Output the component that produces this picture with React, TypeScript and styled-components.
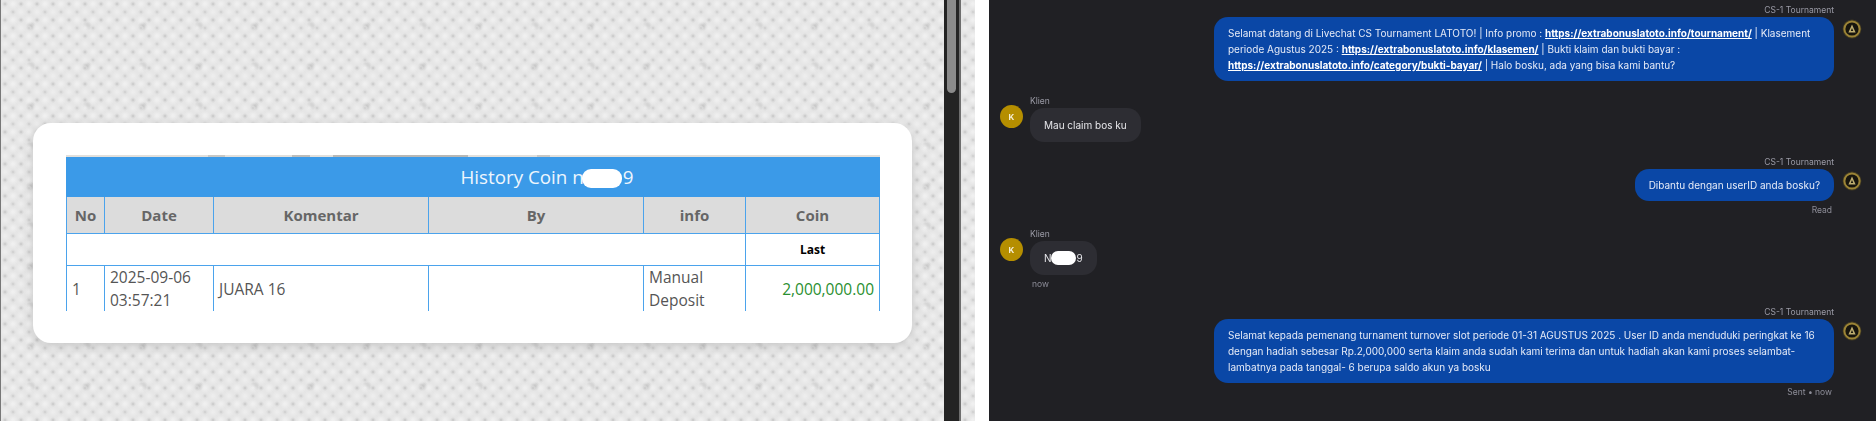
import { FC, ReactNode } from "react";
import styled, { createGlobalStyle } from "styled-components";

const GlobalStyle = createGlobalStyle`
  html, body {
    margin: 0;
    padding: 0;
    background: #202024;
  }
`;

const Page = styled.div`
  display: flex;
  width: 1876px;
  height: 421px;
  overflow: hidden;
`;

const texture = `
  background-color: #e6e6e6;
  background-image:
    radial-gradient(circle at 4px 4px, #c2c2c2 0, #d6d6d6 1.2px, transparent 3px),
    radial-gradient(circle at 12px 12px, #c8c8c8 0, #dadada 1.2px, transparent 3px),
    radial-gradient(circle at 12px 4px, #f2f2f2 0, transparent 5px),
    radial-gradient(circle at 4px 12px, #efefef 0, transparent 5px),
    radial-gradient(circle at 30px 26px, rgba(150, 150, 150, 0.4) 0, transparent 5px);
  background-size: 16px 16px, 16px 16px, 16px 16px, 16px 16px, 56px 40px;
`;

const LeftPane = styled.div`
  ${texture}
  width: 944px;
  flex: none;
  padding: 123px 0 0 33px;
  box-sizing: border-box;
  border-left: 1px solid #777;
`;

const Card = styled.div`
  width: 879px;
  height: 220px;
  margin-left: -1px;
  box-sizing: border-box;
  padding: 32px 32px 32px 33px;
  background: #fff;
  border-radius: 18px;
  box-shadow: 0 3px 12px rgba(0, 0, 0, 0.14);
`;

const TableClip = styled.div`
  height: 156px;
  overflow: hidden;
`;

// the row scrolled away behind the title still shows its bottom pixels
const ScrolledEdge = styled.div`
  height: 2px;
  background: linear-gradient(
    90deg,
    #e2e0dc 0 142px,
    #c8c8c5 142px 159px,
    #e2e0dc 159px 226px,
    #bdbdba 226px 244px,
    #e2e0dc 244px 267px,
    #b8b8b5 267px 402px,
    #e2e0dc 402px 471px,
    #c8c8c5 471px 484px,
    #e2e0dc 484px
  );
`;

const Table = styled.table`
  width: 813px;
  table-layout: fixed;
  border-collapse: collapse;
  font-family: "Open Sans", sans-serif;
  font-size: 15.5px;
  color: #555;

  td, th {
    border: 1px solid #4ba3ec;
    box-sizing: border-box;
  }
`;

const Title = styled.th`
  height: 39px;
  padding: 0 0 0 148px;
  background: #3b9ae8;
  border-color: #3b9ae8 !important;
  color: #eef6fd;
  font-size: 18.8px;
  font-weight: 400;
  text-align: center;
`;

const HeadCell = styled.th`
  height: 37px;
  padding: 0;
  background: #dcdcdc;
  color: #666;
  font-size: 15px;
  font-weight: 700;
  text-align: center;
`;

const BlankCell = styled.td`
  height: 32px;
  padding: 0;
`;

const LastCell = styled.td`
  padding: 0;
  color: #000;
  font-size: 12px;
  font-weight: 700;
  text-align: center;
`;

const BodyCell = styled.td<{ $align?: string }>`
  padding: 0 5px 6px;
  height: 52px;
  line-height: 23px;
  text-align: ${(p) => p.$align || "left"};
`;

const CoinValue = styled.span`
  color: #2a8f30;
`;

const TitleMask = styled.span`
  display: inline-block;
  width: 40px;
  height: 19px;
  margin: 0 1px 0 -2px;
  border-radius: 9px;
  background: #fff;
  vertical-align: -4px;
`;

const Scrollbar = styled.div`
  width: 17px;
  flex: none;
  padding: 0 3px;
  box-sizing: border-box;
  background: #232323;
  border-right: 2px solid #6e6e6e;
`;

const ScrollThumb = styled.div`
  width: 9px;
  height: 93px;
  background: #8a8a8a;
  border-radius: 0 0 5px 5px;
`;

const TextureSliver = styled.div`
  ${texture}
  width: 14px;
  flex: none;
`;

const WhiteGap = styled.div`
  width: 14px;
  flex: none;
  background: #fff;
`;

const ChatPane = styled.div`
  flex: 1;
  display: flex;
  flex-direction: column;
  background: #202024;
  padding: 4px 0 0 11px;
  box-sizing: border-box;
  font-family: Inter, "Noto Sans", sans-serif;
  font-size: 10px;
  line-height: 16px;
  color: #e6e6ea;
  filter: blur(0.35px);
`;

const MessageRow = styled.div<{ $out?: boolean; $top: number }>`
  display: flex;
  justify-content: ${(p) => (p.$out ? "flex-end" : "flex-start")};
  gap: ${(p) => (p.$out ? 8 : 7)}px;
  margin-top: ${(p) => p.$top}px;
  padding-right: ${(p) => (p.$out ? 14 : 0)}px;
`;

const Stack = styled.div<{ $out?: boolean }>`
  display: flex;
  flex-direction: column;
  align-items: ${(p) => (p.$out ? "flex-end" : "flex-start")};
`;

const Label = styled.div`
  font-size: 8.5px;
  line-height: 13px;
  color: #9b9ba6;
`;

const Meta = styled.div<{ $left?: boolean }>`
  font-size: 8.5px;
  line-height: 12px;
  color: #8d8d98;
  margin-top: 3px;
  padding: 0 ${(p) => (p.$left ? 0 : 2)}px 0 ${(p) => (p.$left ? 2 : 0)}px;
`;

const OutBubble = styled.div<{ $wide?: boolean }>`
  width: ${(p) => (p.$wide ? "620px" : "auto")};
  box-sizing: border-box;
  padding: 8px 14px;
  background: #0a47a6;
  border-radius: 14px;
  color: #e6ebf7;
`;

const InBubble = styled.div`
  padding: 9px 14px 8px;
  min-height: 34px;
  box-sizing: border-box;
  background: #2d2d33;
  border-radius: 14px;
`;

const BubbleLink = styled.a`
  color: #fff;
  font-weight: 700;
  text-decoration: underline;
`;

const ClientAvatar = styled.div`
  width: 23px;
  height: 23px;
  flex: none;
  margin-top: 10px;
  border-radius: 50%;
  background: #b58e00;
  color: #f6efd6;
  font-size: 8px;
  font-weight: 700;
  display: flex;
  align-items: center;
  justify-content: center;
`;

const NameMask = styled.span`
  display: inline-block;
  width: 25px;
  height: 14px;
  margin: 0 1px 0 -1px;
  border-radius: 7px;
  background: #fff;
  vertical-align: -3px;
`;

const AgentLogoBox = styled.div`
  width: 20px;
  height: 20px;
  flex: none;
  margin-top: 15px;
`;

const AgentLogo: FC = () => (
  <AgentLogoBox>
    <svg width="20" height="20" viewBox="0 0 20 20">
      <circle cx="10" cy="10" r="9.4" fill="#6b5a22" opacity="0.45" />
      <circle cx="10" cy="10" r="7.6" fill="#17150e" stroke="#9c8436" strokeWidth="2" />
      <path d="M10 5.5 L13.6 13.5 L6.4 13.5 Z" fill="#bfae70" />
      <path d="M10 9 L11.2 12 L8.8 12 Z" fill="#17150e" />
    </svg>
  </AgentLogoBox>
);

interface OutMessageProps {
  top: number;
  wide?: boolean;
  meta?: string;
  children: ReactNode;
}

const OutMessage: FC<OutMessageProps> = ({ top, wide, meta, children }) => (
  <MessageRow $out $top={top}>
    <Stack $out>
      <Label>CS-1 Tournament</Label>
      <OutBubble $wide={wide}>{children}</OutBubble>
      {meta && <Meta>{meta}</Meta>}
    </Stack>
    <AgentLogo />
  </MessageRow>
);

const InMessage: FC<{ top: number; meta?: string; children: ReactNode }> = ({
  top,
  meta,
  children,
}) => (
  <MessageRow $top={top}>
    <ClientAvatar>K</ClientAvatar>
    <Stack>
      <Label>Klien</Label>
      <InBubble>{children}</InBubble>
      {meta && <Meta $left>{meta}</Meta>}
    </Stack>
  </MessageRow>
);

const columns = [38, 109, 215, 215, 102, 134];

const App: FC = () => {
  return (
    <Page>
      <GlobalStyle />
      <LeftPane>
        <Card>
          <TableClip>
            <ScrolledEdge />
            <Table>
              <colgroup>
                {columns.map((w, i) => (
                  <col key={i} width={w} />
                ))}
              </colgroup>
              <thead>
                <tr>
                  <Title colSpan={6}>
                    History Coin n<TitleMask />9
                  </Title>
                </tr>
                <tr>
                  {["No", "Date", "Komentar", "By", "info", "Coin"].map((h) => (
                    <HeadCell key={h}>{h}</HeadCell>
                  ))}
                </tr>
              </thead>
              <tbody>
                <tr>
                  <BlankCell colSpan={5} />
                  <LastCell>Last</LastCell>
                </tr>
                <tr>
                  <BodyCell>1</BodyCell>
                  <BodyCell>
                    2025-09-06
                    <br />
                    03:57:21
                  </BodyCell>
                  <BodyCell>JUARA 16</BodyCell>
                  <BodyCell />
                  <BodyCell>
                    Manual
                    <br />
                    Deposit
                  </BodyCell>
                  <BodyCell $align="right">
                    <CoinValue>2,000,000.00</CoinValue>
                  </BodyCell>
                </tr>
              </tbody>
            </Table>
          </TableClip>
        </Card>
      </LeftPane>
      <Scrollbar>
        <ScrollThumb />
      </Scrollbar>
      <TextureSliver />
      <WhiteGap />
      <ChatPane>
        <OutMessage top={0} wide>
          Selamat datang di Livechat CS Tournament LATOTO! | Info promo :{" "}
          <BubbleLink>https://extrabonuslatoto.info/tournament/</BubbleLink> | Klasement
          periode Agustus 2025 : <BubbleLink>https://extrabonuslatoto.info/klasemen/</BubbleLink>{" "}
          | Bukti klaim dan bukti bayar :{" "}
          <BubbleLink>https://extrabonuslatoto.info/category/bukti-bayar/</BubbleLink> | Halo
          bosku, ada yang bisa kami bantu?
        </OutMessage>
        <InMessage top={14}>Mau claim bos ku</InMessage>
        <OutMessage top={14} meta="Read">
          Dibantu dengan userID anda bosku?
        </OutMessage>
        <InMessage top={12} meta="now">
          N
          <NameMask />9
        </InMessage>
        <OutMessage top={16} wide meta="Sent • now">
          Selamat kepada pemenang turnament turnover slot periode 01-31 AGUSTUS 2025 . User ID
          anda menduduki peringkat ke 16 dengan hadiah sebesar Rp.2,000,000 serta klaim anda
          sudah kami terima dan untuk hadiah akan kami proses selambat-lambatnya pada tanggal- 6
          berupa saldo akun ya bosku
        </OutMessage>
      </ChatPane>
    </Page>
  );
};

export default App;
